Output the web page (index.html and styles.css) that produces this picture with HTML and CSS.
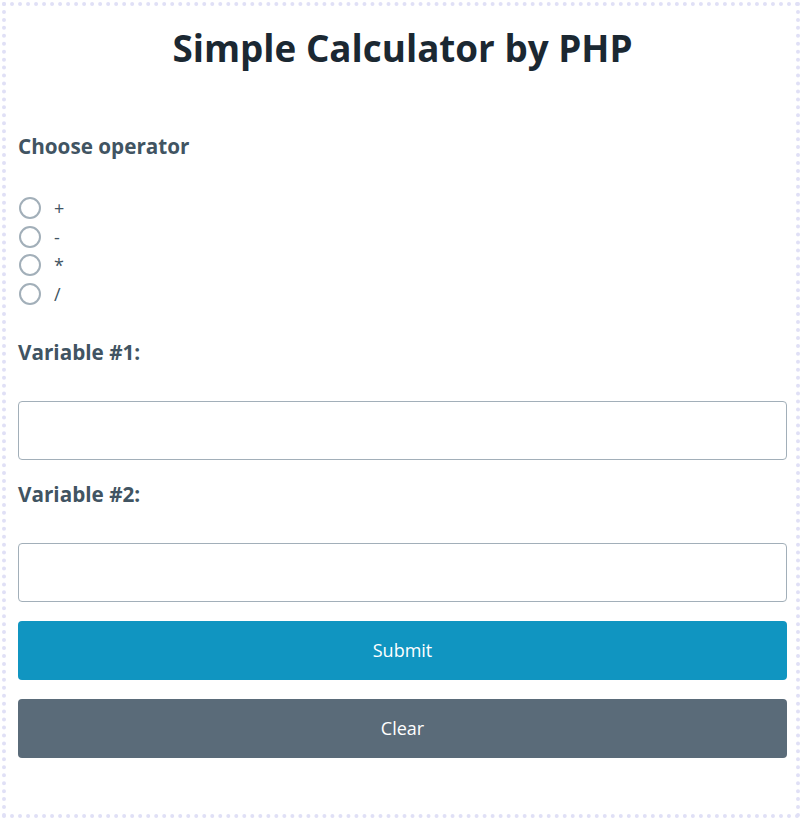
FILE: index.html
```html
<!DOCTYPE html>
<html lang="en">
<head>
<meta charset="utf-8">
<title>Simple Calculator by PHP</title>
<link rel="stylesheet" href="styles.css">
</head>
<body>
<main class="frame">
  <h1 class="title">Simple Calculator by PHP</h1>
  <form class="calc">
    <h5 class="field-label label-op">Choose operator</h5>
    <div class="radios">
      <label class="radio-row"><input type="radio" name="op" value="+"><span>+</span></label>
      <label class="radio-row"><input type="radio" name="op" value="-"><span>-</span></label>
      <label class="radio-row"><input type="radio" name="op" value="*"><span>*</span></label>
      <label class="radio-row"><input type="radio" name="op" value="/"><span>/</span></label>
    </div>
    <h5 class="field-label label-v1">Variable #1:</h5>
    <input class="text-input" type="text" name="v1">
    <h5 class="field-label label-v2">Variable #2:</h5>
    <input class="text-input" type="text" name="v2">
    <button class="btn btn-primary" type="button">Submit</button>
    <button class="btn btn-secondary" type="button">Clear</button>
  </form>
</main>
</body>
</html>
```
FILE: styles.css
```css
* { box-sizing: border-box; }
html, body { margin: 0; padding: 0; background: #fff; }
body {
  font-family: "Open Sans", "Noto Sans", sans-serif;
  color: #415462;
}
.frame {
  margin: 2px;
  width: 798px;
  height: 816px;
  border: 4px dotted #e0e0f6;
  padding: 0 9px 0 12px;
  display: flex;
  flex-direction: column;
}
.title {
  margin: 20px 0 0;
  font-size: 36.8px;
  line-height: 44px;
  font-weight: 700;
  color: #1b2832;
  text-align: center;
}
.calc { display: flex; flex-direction: column; }
.field-label {
  margin: 0;
  font-size: 20.7px;
  line-height: 24px;
  font-weight: 700;
  color: #415462;
}
.label-op { margin-top: 64px; }
.radios {
  margin-top: 39px;
  display: flex;
  flex-direction: column;
  gap: 6.67px;
}
.radio-row {
  display: flex;
  align-items: center;
  height: 22px;
  font-size: 18px;
  color: #415462;
}
.radio-row input {
  appearance: none;
  -webkit-appearance: none;
  margin: 0 13px 0 1px;
  width: 22px;
  height: 22px;
  border: 2px solid #a2afb9;
  border-radius: 50%;
  background: #fff;
}
.label-v1 { margin-top: 35px; }
.label-v2 { margin-top: 22px; }
.text-input {
  margin-top: 37px;
  height: 59px;
  width: 100%;
  border: 1px solid #a2afb9;
  border-radius: 4px;
  background: #fff;
  font: inherit;
  padding: 0 18px;
}
.btn {
  height: 59px;
  width: 100%;
  border: 0;
  border-radius: 4px;
  color: #fff;
  font-family: inherit;
  font-size: 18px;
  cursor: pointer;
}
.btn-primary { background: #1095c1; margin-top: 19px; }
.btn-secondary { background: #5a6b79; margin-top: 19px; }
```
